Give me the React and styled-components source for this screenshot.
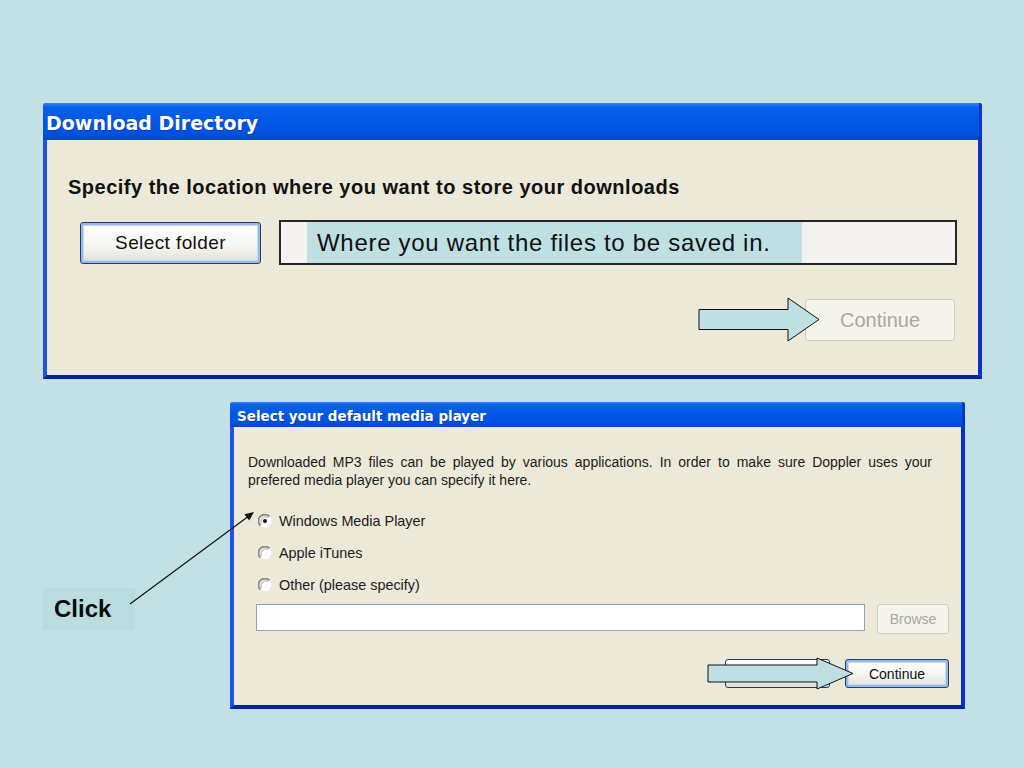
import React from 'react';
import styled, { createGlobalStyle, css } from 'styled-components';

// two XP style dialogs on a slide, with callout arrows over them

const GlobalStyle = createGlobalStyle`
  html, body {
    margin: 0;
    padding: 0;
    background: #c3e1e4;
  }
  * {
    box-sizing: border-box;
  }
`;

const Page = styled.div`
  position: relative;
  width: 1024px;
  height: 768px;
  padding-top: 103px;
  background: #c3e1e4;
  font-family: 'Liberation Sans', Arial, sans-serif;
  display: flex;
  flex-direction: column;
  align-items: flex-start;
`;

const Window = styled.div`
  position: relative;
  width: ${(p) => p.$width}px;
  height: ${(p) => p.$height}px;
  margin-left: ${(p) => p.$left}px;
  margin-top: ${(p) => p.$top || 0}px;
  display: flex;
  flex-direction: column;
  border-radius: 2px 2px 0 0;
`;

const TitleBar = styled.div`
  height: ${(p) => p.$height}px;
  flex: none;
  display: flex;
  align-items: center;
  padding-left: ${(p) => p.$pad}px;
  padding-top: 2px;
  color: #fff;
  font-family: 'DejaVu Sans', Verdana, sans-serif;
  font-weight: bold;
  font-size: ${(p) => p.$size}px;
  background: linear-gradient(
    180deg,
    #3a86f6 0%,
    #0d62ec 10%,
    #0058e8 45%,
    #0052e0 80%,
    #0346cc 100%
  );
  border-right: 3px solid #0a36c8;
  border-radius: 2px 2px 0 0;
  text-shadow: 1px 1px 0 #0b3fae;
`;

const Body = styled.div`
  flex: 1;
  display: flex;
  flex-direction: column;
  background: #ece9d8;
  border-left: 4px solid #1d55e2;
  border-right: 4px solid #0b30c4;
  border-bottom: 4px solid #0322a6;
  padding: ${(p) => p.$pad};
`;

const Heading = styled.div`
  font-family: 'Liberation Sans', Arial, sans-serif;
  font-weight: bold;
  font-size: 20px;
  line-height: 22px;
  letter-spacing: 0.5px;
  color: #111;
`;

const FolderRow = styled.div`
  margin-top: 22px;
  padding-left: 12px;
  display: flex;
  align-items: center;
  gap: 18px;
`;

const XPButton = styled.div`
  flex: none;
  width: ${(p) => p.$w}px;
  height: ${(p) => p.$h}px;
  display: flex;
  align-items: center;
  justify-content: center;
  font-family: 'Liberation Sans', Arial, sans-serif;
  font-size: ${(p) => p.$size}px;
  letter-spacing: ${(p) => p.$spacing || 0}px;
  color: #111;
  border-radius: 3px;
  border: 1px solid #1f3f68;
  background: linear-gradient(180deg, #ffffff 0%, #f6f6f2 55%, #e2ded3 100%);
  ${(p) =>
    p.$focused &&
    css`
      box-shadow: inset 0 0 0 2px #97b6ee, inset 0 0 0 3px #c6d8f7;
    `}
  ${(p) =>
    p.$disabled &&
    css`
      color: #aba897;
      border-color: #cfcdbd;
      background: #f5f4ec;
    `}
`;

const PathField = styled.div`
  flex: 1;
  height: 45px;
  display: flex;
  align-items: stretch;
  border: 2px solid #262626;
  background: #f4f3f1;
`;

const PathHint = styled.span`
  margin-left: 26px;
  width: 495px;
  display: flex;
  align-items: center;
  padding-left: 10px;
  background: #bfe0e3;
  font-family: 'Liberation Sans', Arial, sans-serif;
  font-size: 24px;
  letter-spacing: 0.7px;
  color: #111;
`;

const ButtonRow = styled.div`
  margin-top: ${(p) => p.$top}px;
  padding-right: ${(p) => p.$right || 0}px;
  display: flex;
  justify-content: flex-end;
  align-items: center;
  gap: ${(p) => p.$gap || 0}px;
`;

const Arrow = styled.svg`
  position: absolute;
  left: ${(p) => p.$x}px;
  top: ${(p) => p.$y}px;
  overflow: visible;
`;

const Description = styled.p`
  margin: 0 17px 0 0;
  font-family: 'Liberation Sans', Arial, sans-serif;
  font-size: 14px;
  line-height: 18px;
  text-align: justify;
  color: #1c1c1c;
`;

const RadioList = styled.div`
  margin-top: 16px;
  padding-left: 10px;
  display: flex;
  flex-direction: column;
`;

const RadioRow = styled.label`
  height: 32px;
  display: flex;
  align-items: center;
  gap: 7px;
  font-family: 'Liberation Sans', Arial, sans-serif;
  font-size: 14.4px;
  color: #1c1c1c;
`;

const FieldRow = styled.div`
  margin-top: 3px;
  padding-left: 8px;
  display: flex;
  align-items: flex-start;
  gap: 12px;
`;

const TextField = styled.div`
  flex: 1;
  height: 27px;
  background: #fff;
  border: 1px solid #8ea4bd;
`;

const Callout = styled.div`
  position: absolute;
  left: 43px;
  top: 588px;
  width: 92px;
  height: 42px;
  padding-left: 11px;
  display: flex;
  align-items: center;
  background: #bbdcdf;
  font-family: 'Liberation Sans', Arial, sans-serif;
  font-weight: bold;
  font-size: 24px;
  color: #0a0a0a;
`;

const Leader = styled.svg`
  position: absolute;
  left: 120px;
  top: 500px;
  overflow: visible;
`;

function Radio({ checked }) {
  return (
    <svg width="14" height="14" viewBox="0 0 14 14">
      <circle cx="7" cy="7" r="6.5" fill="#fff" />
      <path
        d="M11.6 2.4 A6.5 6.5 0 0 0 2.4 11.6"
        fill="none"
        stroke="#8e8b80"
        strokeWidth="1.8"
      />
      <path
        d="M10.2 3.8 A4.6 4.6 0 0 0 3.8 10.2"
        fill="none"
        stroke="#c8c4b8"
        strokeWidth="1.4"
      />
      {checked && <circle cx="7" cy="7" r="2" fill="#111" />}
    </svg>
  );
}

function BlockArrow({ x, y, length, head, shaft, height }) {
  const mid = height / 2;
  const s0 = mid - shaft / 2;
  const s1 = mid + shaft / 2;
  const points = [
    [1, s0],
    [length - head, s0],
    [length - head, 1],
    [length, mid],
    [length - head, height - 1],
    [length - head, s1],
    [1, s1],
  ]
    .map((pt) => pt.join(','))
    .join(' ');
  return (
    <Arrow $x={x} $y={y} width={length + 2} height={height + 1}>
      <polygon points={points} fill="#bfe0e3" stroke="#111" strokeWidth="1" />
    </Arrow>
  );
}

export default function App() {
  const players = [
    { label: 'Windows Media Player', checked: true },
    { label: 'Apple iTunes' },
    { label: 'Other (please specify)' },
  ];

  return (
    <Page>
      <GlobalStyle />

      <Window $width={939} $height={276} $left={43}>
        <TitleBar $height={37} $pad={3} $size={19}>
          Download Directory
        </TitleBar>
        <Body $pad="36px 21px 0 21px">
          <Heading>Specify the location where you want to store your downloads</Heading>
          <FolderRow>
            <XPButton $w={181} $h={42} $size={19} $spacing={0.4} $focused>
              Select folder
            </XPButton>
            <PathField>
              <PathHint>Where you want the files to be saved in.</PathHint>
            </PathField>
          </FolderRow>
          <ButtonRow $top={34} $right={2}>
            <XPButton $w={150} $h={42} $size={20} $disabled>
              Continue
            </XPButton>
          </ButtonRow>
        </Body>
        <BlockArrow x={655} y={194} length={121} head={31} shaft={20} height={45} />
      </Window>

      <Window $width={735} $height={307} $left={230} $top={23}>
        <TitleBar $height={25} $pad={7} $size={13.5}>
          Select your default media player
        </TitleBar>
        <Body $pad="26px 12px 0 14px">
          <Description>
            Downloaded MP3 files can be played by various applications. In order to make sure
            Doppler uses your prefered media player you can specify it here.
          </Description>
          <RadioList>
            {players.map((p) => (
              <RadioRow key={p.label}>
                <Radio checked={p.checked} />
                {p.label}
              </RadioRow>
            ))}
          </RadioList>
          <FieldRow>
            <TextField />
            <XPButton $w={72} $h={30} $size={14} $disabled>
              Browse
            </XPButton>
          </FieldRow>
          <ButtonRow $top={25} $gap={15}>
            <XPButton $w={105} $h={29} $size={14}>
              Back
            </XPButton>
            <XPButton $w={104} $h={29} $size={14} $focused>
              Continue
            </XPButton>
          </ButtonRow>
        </Body>
        <BlockArrow x={477} y={255} length={146} head={36} shaft={17} height={33} />
      </Window>

      <Callout>Click</Callout>
      <Leader width="145" height="115">
        <line x1="10" y1="104" x2="127.5" y2="16.9" stroke="#111" strokeWidth="1.2" />
        <polygon points="134,12 129.2,20.6 124.4,14.2" fill="#111" />
      </Leader>
    </Page>
  );
}
